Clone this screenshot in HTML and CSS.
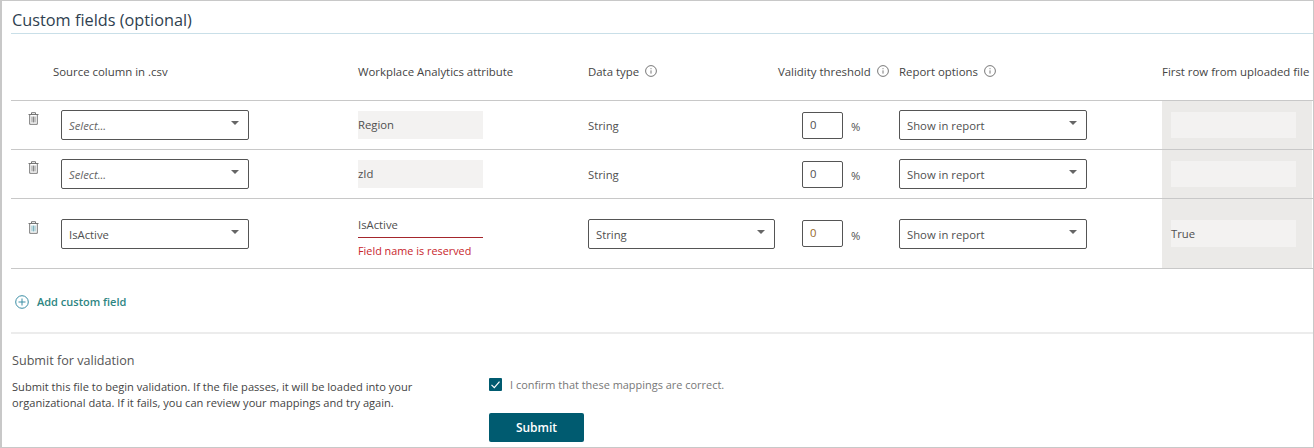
FILE: index.html
```html
<!DOCTYPE html>
<html lang="en">
<head>
  <meta charset="UTF-8">
  <title>Custom fields</title>
  <meta name="viewport" content="width=device-width, initial-scale=1">
  <link rel="stylesheet" href="styles.css">
</head>
<body>

<div class="panel">
  <h2 class="title">Custom fields (optional)</h2>

  <div class="head">
    <span>Source column in .csv</span>
    <span>Workplace Analytics attribute</span>
    <span>Data type <svg class="info" viewBox="0 0 12 12"><circle cx="6" cy="6" r="5.4"/><path d="M6 5.4v3.2M6 3.2v1"/></svg></span>
    <span>Validity threshold <svg class="info" viewBox="0 0 12 12"><circle cx="6" cy="6" r="5.4"/><path d="M6 5.4v3.2M6 3.2v1"/></svg></span>
    <span>Report options <svg class="info" viewBox="0 0 12 12"><circle cx="6" cy="6" r="5.4"/><path d="M6 5.4v3.2M6 3.2v1"/></svg></span>
    <span>First row from uploaded file</span>
  </div>

  <div class="row">
    <svg class="trash" viewBox="0 0 11 13"><path d="M.5 2.5h10M3.5 2.5V.7h4v1.8M1.7 2.5v9.8h7.6V2.5"/><path class="bars" d="M4 4.5v6M5.5 4.5v6M7 4.5v6"/></svg>
    <div class="select placeholder">Select...</div>
    <div class="readonly">Region</div>
    <div class="plain">String</div>
    <div class="threshold"><span class="num">0</span><span class="pct">%</span></div>
    <div class="select">Show in report</div>
    <div class="sample"><div class="sample-val"></div></div>
  </div>

  <div class="row">
    <svg class="trash" viewBox="0 0 11 13"><path d="M.5 2.5h10M3.5 2.5V.7h4v1.8M1.7 2.5v9.8h7.6V2.5"/><path class="bars" d="M4 4.5v6M5.5 4.5v6M7 4.5v6"/></svg>
    <div class="select placeholder">Select...</div>
    <div class="readonly">zId</div>
    <div class="plain">String</div>
    <div class="threshold"><span class="num">0</span><span class="pct">%</span></div>
    <div class="select">Show in report</div>
    <div class="sample"><div class="sample-val"></div></div>
  </div>

  <div class="row row-tall">
    <svg class="trash trash-active" viewBox="0 0 11 13"><path d="M.5 2.5h10M3.5 2.5V.7h4v1.8M1.7 2.5v9.8h7.6V2.5"/><path class="bars" d="M4 4.5v6M5.5 4.5v6M7 4.5v6"/></svg>
    <div class="select">IsActive</div>
    <div class="attr-edit">
      <div class="attr-input">IsActive</div>
      <div class="attr-error">Field name is reserved</div>
    </div>
    <div class="select select-type">String</div>
    <div class="threshold"><span class="num num-warn">0</span><span class="pct">%</span></div>
    <div class="select">Show in report</div>
    <div class="sample"><div class="sample-val">True</div></div>
  </div>

  <div class="add">
    <svg class="add-icon" viewBox="0 0 14 14"><circle cx="7" cy="7" r="6.3"/><path d="M7 3.5v7M3.5 7h7"/></svg>
    <span>Add custom field</span>
  </div>

  <div class="submit">
    <div class="submit-text">
      <h3>Submit for validation</h3>
      <p>Submit this file to begin validation. If the file passes, it will be loaded into your organizational data. If it fails, you can review your mappings and try again.</p>
    </div>
    <div class="submit-action">
      <label class="confirm">
        <span class="check"><svg viewBox="0 0 13 13"><path d="M2.5 6.8l2.8 2.8 5.2-6"/></svg></span>
        I confirm that these mappings are correct.
      </label>
      <button>Submit</button>
    </div>
  </div>
</div>

</body>
</html>
```

FILE: styles.css
```css
* {
  box-sizing: border-box;
}
body {
  margin: 0;
  font-family: "Open Sans", Arial, sans-serif;
  font-size: 11.3px;
  color: #4f4f4f;
  background: white;
}
.panel {
  height: 448px;
  padding-left: 9px;
  border: 1px solid #c8c8c8;
  border-width: 1px 1px 1px 2px;
  overflow: hidden;
}
.title {
  height: 33px;
  margin: 0;
  padding: 9px 0 0 1px;
  font-size: 16.3px;
  line-height: 21px;
  font-weight: 400;
  color: #2f3f50;
  border-bottom: 1px solid #c9dfe8;
}
.head {
  display: grid;
  grid-template-columns: 42px 305px 230px 190px 121px 263px 150px;
  align-items: center;
  height: 67px;
  padding-top: 9px;
  font-size: 11.4px;
  color: #444;
  border-bottom: 1px solid #c8c8c8;
}
.head span:first-child {
  grid-column: 2;
}
.info {
  width: 12px;
  height: 12px;
  margin-left: 3px;
  vertical-align: -1px;
  fill: none;
  stroke: #555;
  stroke-width: 0.8;
}
.row {
  display: grid;
  grid-template-columns: 50px 297px 230px 214px 97px 263px 150px;
  align-items: center;
  height: 49px;
  border-bottom: 1px solid #c8c8c8;
}
.row-tall {
  height: 70px;
}
.trash {
  align-self: start;
  width: 11px;
  height: 13px;
  margin: 11px 0 0 17px;
  fill: none;
  stroke: #777;
}
.bars {
  stroke: #888;
}
.row-tall .trash {
  margin-top: 22px;
}
.trash-active .bars {
  stroke: #7fb2bd;
}
.select {
  position: relative;
  width: 188px;
  height: 30px;
  padding: 0 7px;
  line-height: 29px;
  color: #4f4f4f;
  background: white;
  border: 1px solid #555;
  border-radius: 2px;
}
.select::after {
  content: "";
  position: absolute;
  top: 10px;
  right: 9px;
  border: 4px solid transparent;
  border-top: 4px solid #666;
  border-bottom: 0;
}
.placeholder {
  font-style: italic;
  color: #666;
}
.select-type {
  width: 187px;
}
.readonly {
  width: 125px;
  height: 28px;
  line-height: 28px;
  background: #f3f2f1;
}
.threshold {
  display: flex;
  align-items: center;
  height: 27px;
}
.num {
  width: 41px;
  height: 27px;
  padding-left: 7px;
  line-height: 24px;
  border: 1px solid #555;
  border-radius: 2px;
}
.num-warn {
  color: #96692a;
}
.pct {
  margin: 3px 0 0 8px;
}
.attr-edit {
  align-self: start;
  width: 125px;
  margin-top: 17px;
}
.attr-input {
  height: 22px;
  line-height: 18px;
  border-bottom: 1px solid #a4262c;
}
.attr-error {
  margin-top: 5px;
  font-size: 10.85px;
  line-height: 16px;
  color: #c8252b;
}
.sample {
  align-self: stretch;
  display: flex;
  align-items: center;
  padding: 0 14px 0 9px;
  background: #ebeae8;
}
.sample-val {
  width: 125px;
  height: 26px;
  line-height: 26px;
  background: #f3f2f1;
}
.row-tall .sample-val {
  height: 27px;
  line-height: 27px;
}
.add {
  display: flex;
  align-items: center;
  gap: 8px;
  height: 65px;
  padding: 2px 0 0 4px;
  font-size: 11px;
  font-weight: 600;
  color: #2d8582;
  border-bottom: 2px solid #ececec;
}
.add-icon {
  width: 14px;
  height: 14px;
  fill: none;
  stroke: #3b8ea5;
}
.submit {
  display: flex;
  padding-top: 18px;
}
.submit-text {
  width: 478px;
  padding-left: 1px;
}
.submit-text h3 {
  margin: 0 0 9px;
  font-size: 12.6px;
  line-height: 18px;
  font-weight: 400;
  color: #555;
}
.submit-text p {
  width: 410px;
  margin: 0;
  font-size: 11.1px;
  line-height: 16px;
  color: #444;
}
.submit-action {
  padding-top: 24px;
}
.confirm {
  display: flex;
  align-items: center;
  gap: 8px;
  height: 16px;
  font-size: 10.95px;
  color: #777;
}
.check {
  width: 13px;
  height: 13px;
  background: #005b70;
  border-radius: 1px;
}
.check svg {
  display: block;
  fill: none;
  stroke: white;
  stroke-width: 1.2;
}
button {
  display: block;
  width: 95px;
  height: 29px;
  margin-top: 21px;
  padding: 0;
  font-family: inherit;
  font-size: 12px;
  font-weight: 600;
  color: white;
  background: #005b70;
  border: none;
  border-radius: 2px;
}
```
